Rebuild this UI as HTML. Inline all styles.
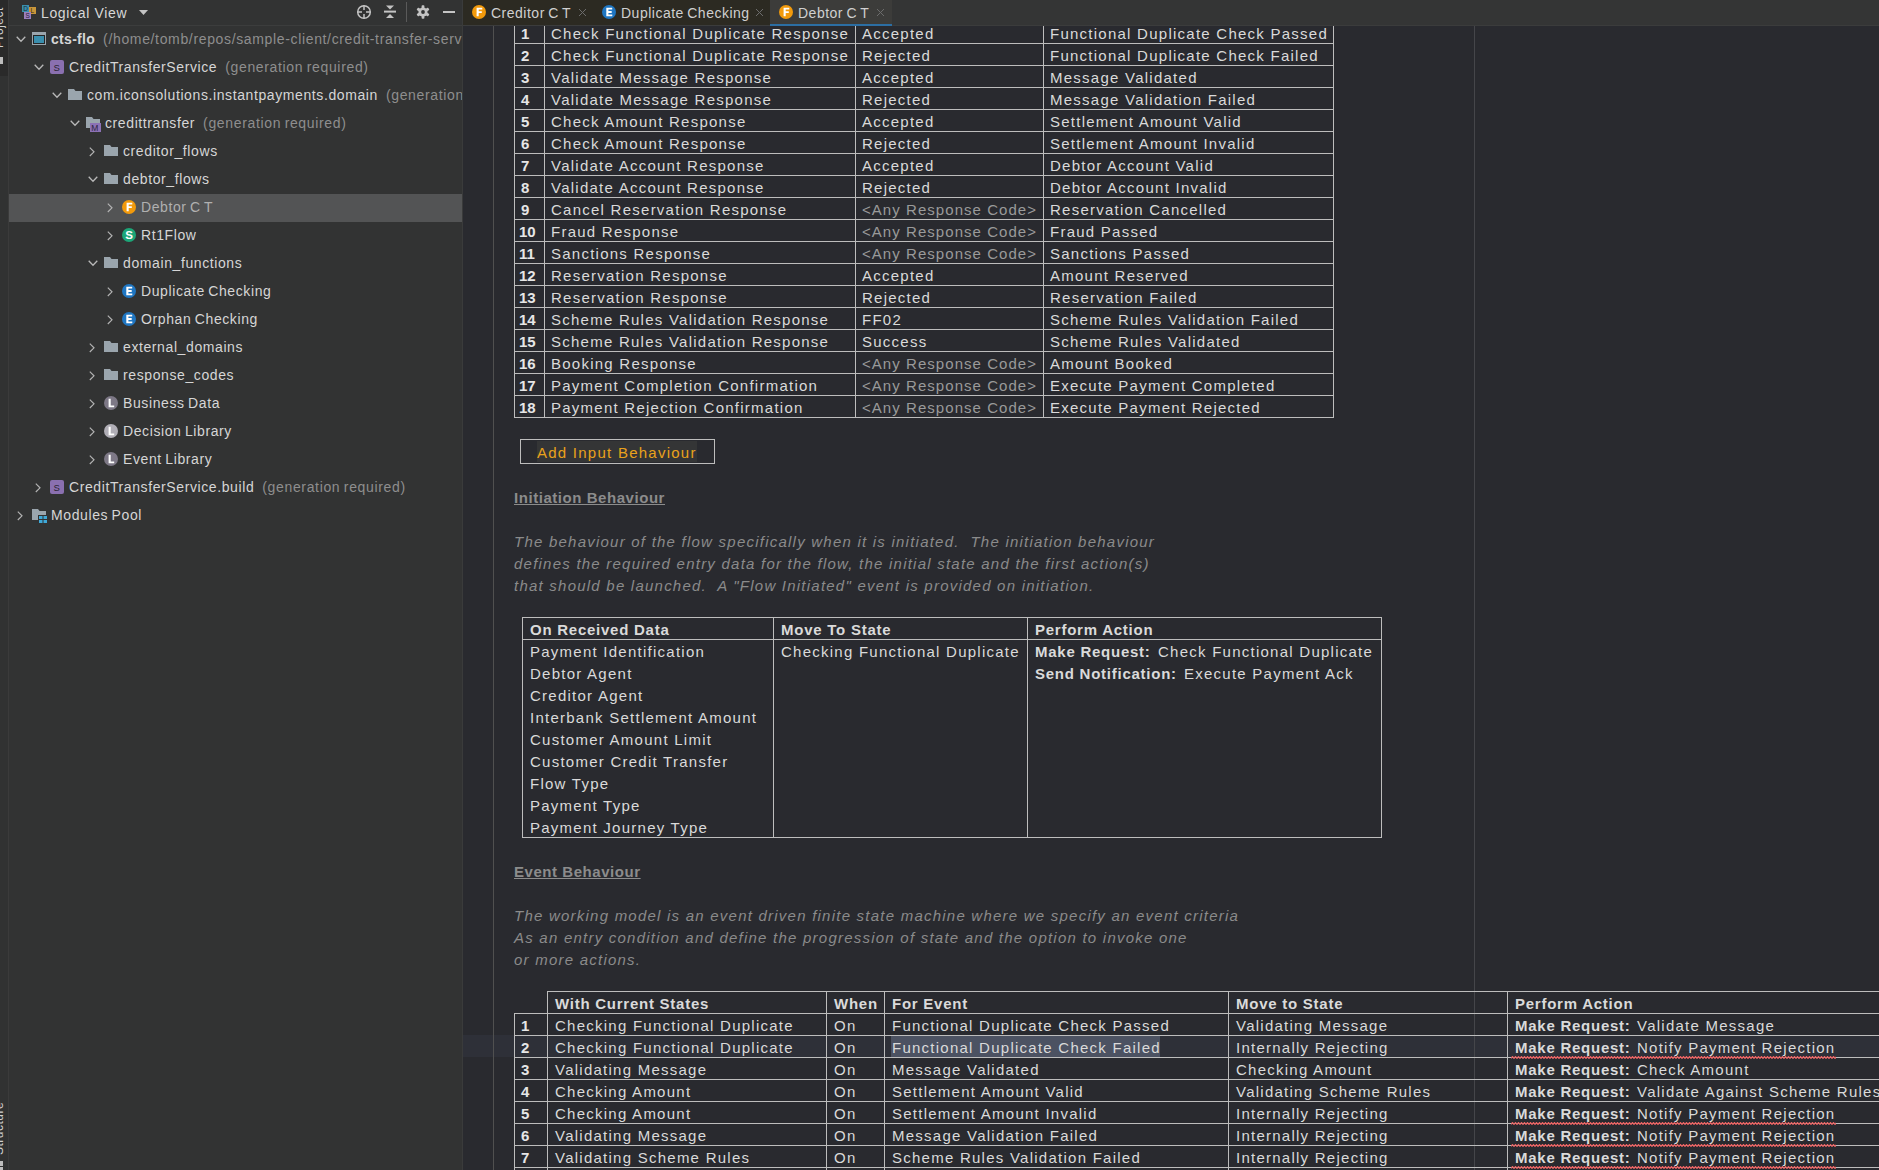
<!DOCTYPE html>
<html><head><meta charset="utf-8"><style>
html,body{margin:0;padding:0}
body{width:1879px;height:1170px;overflow:hidden;position:relative;background:#292a2f;font-family:"Liberation Sans",sans-serif}
.st,.tt,.tab,.ed,.num,.bd,.it,.hd,.rot{position:absolute;white-space:pre;line-height:20px}
.st{font-size:14px;letter-spacing:0.65px;color:#d8d8d8}
.tt{font-size:14px;letter-spacing:0.6px;word-spacing:-1px;color:#d6d6d6}
.tt .dim{color:#8e8e8e;font-weight:normal;letter-spacing:0.65px;margin-left:8px}
.tab{font-size:14px;letter-spacing:0.5px;word-spacing:-1px;color:#d0d0d0}
.ed{font-size:15px;letter-spacing:1.25px;color:#dadada}
.num{font-size:15px;font-weight:bold;letter-spacing:0px;color:#e6e6e6}
.bd{font-size:15px;font-weight:bold;letter-spacing:0.75px;color:#dadada}
.it{font-size:15px;font-style:italic;letter-spacing:1.23px;color:#8b8b8b}
.hd{font-size:15px;font-weight:bold;letter-spacing:0.55px;color:#8c8c8c;text-decoration:underline;text-underline-offset:1px}
.rot{font-size:12px;letter-spacing:0.5px;color:#d0d0d0;transform:rotate(-90deg);transform-origin:0 0}
</style></head><body>
<div style="position:absolute;left:0px;top:0px;width:8px;height:1170px;background:#313232;"></div>
<div style="position:absolute;left:0px;top:0px;width:8px;height:76px;background:#2a2a2a;"></div>
<div style="position:absolute;left:8px;top:0px;width:1px;height:1170px;background:#3b3b3b;"></div>
<div style="position:absolute;left:0;top:0;width:8px;height:1170px;overflow:hidden">
<div class="rot" style="left:-11px;top:48px;">Project</div>
<div style="position:absolute;left:0px;top:57px;width:3px;height:7px;background:#bdbdbd;"></div>
<div class="rot" style="left:-11px;top:1155px;">Structure</div>
<div style="position:absolute;left:0px;top:1161px;width:3px;height:5px;background:#bdbdbd;"></div>
<div style="position:absolute;left:0px;top:1167px;width:3px;height:3px;background:#bdbdbd;"></div>
</div>
<div style="position:absolute;left:9px;top:0px;width:453px;height:1170px;background:#323333;"></div>
<div style="position:absolute;left:9px;top:25px;width:453px;height:1px;background:#3c3d3d;"></div>
<div style="position:absolute;left:462px;top:0px;width:1px;height:1170px;background:#3a3b3b;"></div>
<svg style="position:absolute;left:22px;top:5px" width="15" height="15" viewBox="0 0 15 15">
<rect x="0" y="0" width="7" height="7" fill="#3a8fae"/><text x="1.2" y="6" font-size="6.5" font-family="Liberation Sans" fill="#1a2a30">D</text>
<rect x="7" y="2" width="7" height="7" fill="#c9963a"/><text x="8.6" y="8" font-size="6.5" font-family="Liberation Sans" fill="#3a2a10">L</text>
<rect x="2" y="7" width="7" height="7" fill="#9a80bf"/><text x="3.4" y="13" font-size="6.5" font-family="Liberation Sans" fill="#2c2238">S</text>
</svg>
<div class="st" style="left:41px;top:3px;">Logical View</div>
<svg style="position:absolute;left:139px;top:10px" width="9" height="6"><path d="M0 0 L9 0 L4.5 5 Z" fill="#c4c4c4"/></svg>
<svg style="position:absolute;left:356px;top:4px" width="16" height="16" viewBox="0 0 16 16">
<circle cx="8" cy="8" r="6.3" fill="none" stroke="#c4c4c4" stroke-width="1.5"/>
<path d="M8 1.5V6 M8 10V14.5 M1.5 8H6 M10 8H14.5" stroke="#c4c4c4" stroke-width="1.5"/></svg>
<svg style="position:absolute;left:383px;top:5px" width="14" height="14" viewBox="0 0 14 14">
<path d="M3 0.5 H11 L7 4.5 Z" fill="#c4c4c4"/><rect x="1" y="5.6" width="12" height="2" fill="#c4c4c4"/>
<path d="M3 13 H11 L7 9 Z" fill="#c4c4c4"/></svg>
<div style="position:absolute;left:406px;top:2px;width:1px;height:20px;background:#5a5a5a;"></div>
<svg style="position:absolute;left:416px;top:5px" width="14" height="14" viewBox="0 0 14 14">
<g fill="#c4c4c4"><circle cx="7" cy="7" r="4.6"/>
<rect x="5.6" y="0.3" width="2.8" height="3" rx="0.8"/><rect x="5.6" y="10.7" width="2.8" height="3" rx="0.8"/>
<rect x="5.6" y="0.3" width="2.8" height="3" rx="0.8" transform="rotate(60 7 7)"/><rect x="5.6" y="10.7" width="2.8" height="3" rx="0.8" transform="rotate(60 7 7)"/>
<rect x="5.6" y="0.3" width="2.8" height="3" rx="0.8" transform="rotate(120 7 7)"/><rect x="5.6" y="10.7" width="2.8" height="3" rx="0.8" transform="rotate(120 7 7)"/>
</g><circle cx="7" cy="7" r="1.9" fill="#323333"/></svg>
<div style="position:absolute;left:443px;top:11px;width:12px;height:2px;background:#c4c4c4;"></div>
<div style="position:absolute;left:9px;top:26px;width:453px;height:1144px;overflow:hidden">
<svg style="position:absolute;left:7px;top:10px" width="10" height="7" viewBox="0 0 10 7"><path d="M0.7 0.8 L5 5.2 L9.3 0.8" fill="none" stroke="#b8b8b8" stroke-width="1.3"/></svg>
<svg style="position:absolute;left:23px;top:6px" width="14" height="13" viewBox="0 0 14 13">
<rect x="0" y="0" width="14" height="13" fill="#9aa5ad"/><rect x="1" y="3" width="12" height="9" fill="#252525"/>
<rect x="2" y="4" width="10" height="7" fill="#3a8fae"/></svg>
<div class="tt" style="left:42px;top:3px;font-weight:bold;letter-spacing:0.3px">cts-flo<span class="dim">(/home/tomb/repos/sample-client/credit-transfer-service)</span></div>
<svg style="position:absolute;left:25px;top:38px" width="10" height="7" viewBox="0 0 10 7"><path d="M0.7 0.8 L5 5.2 L9.3 0.8" fill="none" stroke="#b8b8b8" stroke-width="1.3"/></svg>
<svg style="position:absolute;left:41px;top:34px" width="14" height="14" viewBox="0 0 14 14">
<rect x="0" y="0" width="14" height="14" rx="2" fill="#8a70b0"/><text x="3.6" y="10.6" font-size="9.5" font-family="Liberation Sans" fill="#2a2430">S</text></svg>
<div class="tt" style="left:60px;top:31px;">CreditTransferService<span class="dim">(generation required)</span></div>
<svg style="position:absolute;left:43px;top:66px" width="10" height="7" viewBox="0 0 10 7"><path d="M0.7 0.8 L5 5.2 L9.3 0.8" fill="none" stroke="#b8b8b8" stroke-width="1.3"/></svg>
<svg style="position:absolute;left:59px;top:63px" width="14" height="12" viewBox="0 0 14 12">
<path d="M0 0 H6 L7.5 2 H14 V11 H0 Z" fill="#9aa5ad"/></svg>
<div class="tt" style="left:78px;top:59px;">com.iconsolutions.instantpayments.domain<span class="dim">(generation required)</span></div>
<svg style="position:absolute;left:61px;top:94px" width="10" height="7" viewBox="0 0 10 7"><path d="M0.7 0.8 L5 5.2 L9.3 0.8" fill="none" stroke="#b8b8b8" stroke-width="1.3"/></svg>
<svg style="position:absolute;left:77px;top:91px" width="16" height="15" viewBox="0 0 16 15">
<path d="M0 0 H6 L7.5 2 H14 V11 H0 Z" fill="#9aa5ad"/><rect x="4" y="6" width="11" height="9" fill="#8c72b5"/>
<text x="5.3" y="14" font-size="8.5" font-family="Liberation Sans" fill="#2e2540">M</text></svg>
<div class="tt" style="left:96px;top:87px;">credittransfer<span class="dim">(generation required)</span></div>
<svg style="position:absolute;left:80px;top:121px" width="7" height="10" viewBox="0 0 7 10"><path d="M0.8 0.6 L5 4.8 L0.8 9" fill="none" stroke="#b4b4b4" stroke-width="1.15"/></svg>
<svg style="position:absolute;left:95px;top:119px" width="14" height="12" viewBox="0 0 14 12">
<path d="M0 0 H6 L7.5 2 H14 V11 H0 Z" fill="#9aa5ad"/></svg>
<div class="tt" style="left:114px;top:115px;">creditor_flows</div>
<svg style="position:absolute;left:79px;top:150px" width="10" height="7" viewBox="0 0 10 7"><path d="M0.7 0.8 L5 5.2 L9.3 0.8" fill="none" stroke="#b8b8b8" stroke-width="1.3"/></svg>
<svg style="position:absolute;left:95px;top:147px" width="14" height="12" viewBox="0 0 14 12">
<path d="M0 0 H6 L7.5 2 H14 V11 H0 Z" fill="#9aa5ad"/></svg>
<div class="tt" style="left:114px;top:143px;">debtor_flows</div>
<div style="position:absolute;left:0px;top:168px;width:453px;height:28px;background:#535455;"></div>
<svg style="position:absolute;left:98px;top:177px" width="7" height="10" viewBox="0 0 7 10"><path d="M0.8 0.6 L5 4.8 L0.8 9" fill="none" stroke="#b4b4b4" stroke-width="1.15"/></svg>
<svg style="position:absolute;left:113px;top:174px" width="14" height="14" viewBox="0 0 14 14">
<circle cx="7" cy="7" r="7" fill="#f29a0c"/><path d="M4.6 2.7H10.3V4.6H6.7V6.3H9.8V8.1H6.7V11.3H4.6Z" fill="#fff"/></svg>
<div class="tt" style="left:132px;top:171px;color:#b0b0b0">Debtor C T</div>
<svg style="position:absolute;left:98px;top:205px" width="7" height="10" viewBox="0 0 7 10"><path d="M0.8 0.6 L5 4.8 L0.8 9" fill="none" stroke="#b4b4b4" stroke-width="1.15"/></svg>
<svg style="position:absolute;left:113px;top:202px" width="14" height="14" viewBox="0 0 14 14">
<circle cx="7" cy="7" r="7" fill="#1ca678"/><text x="7" y="11.2" text-anchor="middle" font-size="11.5" font-weight="bold" font-family="Liberation Sans" fill="#fff">S</text></svg>
<div class="tt" style="left:132px;top:199px;">Rt1Flow</div>
<svg style="position:absolute;left:79px;top:234px" width="10" height="7" viewBox="0 0 10 7"><path d="M0.7 0.8 L5 5.2 L9.3 0.8" fill="none" stroke="#b8b8b8" stroke-width="1.3"/></svg>
<svg style="position:absolute;left:95px;top:231px" width="14" height="12" viewBox="0 0 14 12">
<path d="M0 0 H6 L7.5 2 H14 V11 H0 Z" fill="#9aa5ad"/></svg>
<div class="tt" style="left:114px;top:227px;">domain_functions</div>
<svg style="position:absolute;left:98px;top:261px" width="7" height="10" viewBox="0 0 7 10"><path d="M0.8 0.6 L5 4.8 L0.8 9" fill="none" stroke="#b4b4b4" stroke-width="1.15"/></svg>
<svg style="position:absolute;left:113px;top:258px" width="14" height="14" viewBox="0 0 14 14">
<circle cx="7" cy="7" r="7" fill="#1f76c2"/><path d="M4.3 2.7H10.2V4.6H6.4V6.1H9.7V7.9H6.4V9.4H10.3V11.3H4.3Z" fill="#fff"/></svg>
<div class="tt" style="left:132px;top:255px;">Duplicate Checking</div>
<svg style="position:absolute;left:98px;top:289px" width="7" height="10" viewBox="0 0 7 10"><path d="M0.8 0.6 L5 4.8 L0.8 9" fill="none" stroke="#b4b4b4" stroke-width="1.15"/></svg>
<svg style="position:absolute;left:113px;top:286px" width="14" height="14" viewBox="0 0 14 14">
<circle cx="7" cy="7" r="7" fill="#1f76c2"/><path d="M4.3 2.7H10.2V4.6H6.4V6.1H9.7V7.9H6.4V9.4H10.3V11.3H4.3Z" fill="#fff"/></svg>
<div class="tt" style="left:132px;top:283px;">Orphan Checking</div>
<svg style="position:absolute;left:80px;top:317px" width="7" height="10" viewBox="0 0 7 10"><path d="M0.8 0.6 L5 4.8 L0.8 9" fill="none" stroke="#b4b4b4" stroke-width="1.15"/></svg>
<svg style="position:absolute;left:95px;top:315px" width="14" height="12" viewBox="0 0 14 12">
<path d="M0 0 H6 L7.5 2 H14 V11 H0 Z" fill="#9aa5ad"/></svg>
<div class="tt" style="left:114px;top:311px;">external_domains</div>
<svg style="position:absolute;left:80px;top:345px" width="7" height="10" viewBox="0 0 7 10"><path d="M0.8 0.6 L5 4.8 L0.8 9" fill="none" stroke="#b4b4b4" stroke-width="1.15"/></svg>
<svg style="position:absolute;left:95px;top:343px" width="14" height="12" viewBox="0 0 14 12">
<path d="M0 0 H6 L7.5 2 H14 V11 H0 Z" fill="#9aa5ad"/></svg>
<div class="tt" style="left:114px;top:339px;">response_codes</div>
<svg style="position:absolute;left:80px;top:373px" width="7" height="10" viewBox="0 0 7 10"><path d="M0.8 0.6 L5 4.8 L0.8 9" fill="none" stroke="#b4b4b4" stroke-width="1.15"/></svg>
<svg style="position:absolute;left:95px;top:370px" width="14" height="14" viewBox="0 0 14 14">
<circle cx="7" cy="7" r="7" fill="#7d7886"/><path d="M4.6 2.7H6.7V9.4H10.2V11.3H4.6Z" fill="#fff"/></svg>
<div class="tt" style="left:114px;top:367px;">Business Data</div>
<svg style="position:absolute;left:80px;top:401px" width="7" height="10" viewBox="0 0 7 10"><path d="M0.8 0.6 L5 4.8 L0.8 9" fill="none" stroke="#b4b4b4" stroke-width="1.15"/></svg>
<svg style="position:absolute;left:95px;top:398px" width="14" height="14" viewBox="0 0 14 14">
<circle cx="7" cy="7" r="7" fill="#b0aeb6"/><path d="M4.6 2.7H6.7V9.4H10.2V11.3H4.6Z" fill="#fff"/></svg>
<div class="tt" style="left:114px;top:395px;">Decision Library</div>
<svg style="position:absolute;left:80px;top:429px" width="7" height="10" viewBox="0 0 7 10"><path d="M0.8 0.6 L5 4.8 L0.8 9" fill="none" stroke="#b4b4b4" stroke-width="1.15"/></svg>
<svg style="position:absolute;left:95px;top:426px" width="14" height="14" viewBox="0 0 14 14">
<circle cx="7" cy="7" r="7" fill="#7d7886"/><path d="M4.6 2.7H6.7V9.4H10.2V11.3H4.6Z" fill="#fff"/></svg>
<div class="tt" style="left:114px;top:423px;">Event Library</div>
<svg style="position:absolute;left:26px;top:457px" width="7" height="10" viewBox="0 0 7 10"><path d="M0.8 0.6 L5 4.8 L0.8 9" fill="none" stroke="#b4b4b4" stroke-width="1.15"/></svg>
<svg style="position:absolute;left:41px;top:454px" width="14" height="14" viewBox="0 0 14 14">
<rect x="0" y="0" width="14" height="14" rx="2" fill="#8a70b0"/><text x="3.6" y="10.6" font-size="9.5" font-family="Liberation Sans" fill="#2a2430">S</text></svg>
<div class="tt" style="left:60px;top:451px;">CreditTransferService.build<span class="dim">(generation required)</span></div>
<svg style="position:absolute;left:8px;top:485px" width="7" height="10" viewBox="0 0 7 10"><path d="M0.8 0.6 L5 4.8 L0.8 9" fill="none" stroke="#b4b4b4" stroke-width="1.15"/></svg>
<svg style="position:absolute;left:23px;top:483px" width="16" height="15" viewBox="0 0 16 15">
<path d="M0 0 H6 L7.5 2 H14 V11 H0 Z" fill="#9aa5ad"/><rect x="6" y="6" width="10" height="9" fill="#323333"/>
<g fill="#3fa9d8"><rect x="7" y="7" width="3.5" height="3"/><rect x="11.5" y="7" width="3.5" height="3"/><rect x="7" y="11" width="3.5" height="3"/><rect x="11.5" y="11" width="3.5" height="3"/></g></svg>
<div class="tt" style="left:42px;top:479px;">Modules Pool</div>
</div>
<div style="position:absolute;left:463px;top:0px;width:1416px;height:25px;background:#343535;"></div>
<div style="position:absolute;left:463px;top:0px;width:307px;height:25px;background:#2c2a22;"></div>
<div style="position:absolute;left:770px;top:0px;width:122px;height:25px;background:#3c3c3a;"></div>
<div style="position:absolute;left:463px;top:25px;width:1416px;height:1px;background:#3b3c3c;"></div>
<div style="position:absolute;left:770px;top:24px;width:122px;height:2px;background:#2c6ea3;"></div>
<svg style="position:absolute;left:472px;top:5px" width="14" height="14" viewBox="0 0 14 14">
<circle cx="7" cy="7" r="7" fill="#f29a0c"/><path d="M4.6 2.7H10.3V4.6H6.7V6.3H9.8V8.1H6.7V11.3H4.6Z" fill="#fff"/></svg>
<div class="tab" style="left:491px;top:3px;">Creditor C T</div>
<svg style="position:absolute;left:578px;top:8px" width="9" height="9" viewBox="0 0 9 9"><path d="M1 1 L8 8 M8 1 L1 8" stroke="#6c6c6c" stroke-width="1"/></svg>
<svg style="position:absolute;left:602px;top:5px" width="14" height="14" viewBox="0 0 14 14">
<circle cx="7" cy="7" r="7" fill="#1f76c2"/><path d="M4.3 2.7H10.2V4.6H6.4V6.1H9.7V7.9H6.4V9.4H10.3V11.3H4.3Z" fill="#fff"/></svg>
<div class="tab" style="left:621px;top:3px;">Duplicate Checking</div>
<svg style="position:absolute;left:755px;top:8px" width="9" height="9" viewBox="0 0 9 9"><path d="M1 1 L8 8 M8 1 L1 8" stroke="#6c6c6c" stroke-width="1"/></svg>
<svg style="position:absolute;left:779px;top:5px" width="14" height="14" viewBox="0 0 14 14">
<circle cx="7" cy="7" r="7" fill="#f29a0c"/><path d="M4.6 2.7H10.3V4.6H6.7V6.3H9.8V8.1H6.7V11.3H4.6Z" fill="#fff"/></svg>
<div class="tab" style="left:798px;top:3px;">Debtor C T</div>
<svg style="position:absolute;left:876px;top:8px" width="9" height="9" viewBox="0 0 9 9"><path d="M1 1 L8 8 M8 1 L1 8" stroke="#6c6c6c" stroke-width="1"/></svg>
<div style="position:absolute;left:463px;top:26px;width:1416px;height:1144px;overflow:hidden;background:#292a2f">
<div style="position:absolute;left:0px;top:1009px;width:1416px;height:22px;background:#2e3038;"></div>
<div style="position:absolute;left:30px;top:0px;width:1px;height:1144px;background:#505050;"></div>
<div style="position:absolute;left:1011px;top:0px;width:1px;height:1144px;background:#45464a;"></div>
<div style="position:absolute;left:51px;top:0px;width:1px;height:392px;background:#bdbdbd;"></div>
<div style="position:absolute;left:81px;top:0px;width:1px;height:392px;background:#bdbdbd;"></div>
<div style="position:absolute;left:392px;top:0px;width:1px;height:392px;background:#bdbdbd;"></div>
<div style="position:absolute;left:580px;top:0px;width:1px;height:392px;background:#bdbdbd;"></div>
<div style="position:absolute;left:870px;top:0px;width:1px;height:392px;background:#bdbdbd;"></div>
<div style="position:absolute;left:51px;top:17px;width:820px;height:1px;background:#bdbdbd;"></div>
<div style="position:absolute;left:51px;top:39px;width:820px;height:1px;background:#bdbdbd;"></div>
<div style="position:absolute;left:51px;top:61px;width:820px;height:1px;background:#bdbdbd;"></div>
<div style="position:absolute;left:51px;top:83px;width:820px;height:1px;background:#bdbdbd;"></div>
<div style="position:absolute;left:51px;top:105px;width:820px;height:1px;background:#bdbdbd;"></div>
<div style="position:absolute;left:51px;top:127px;width:820px;height:1px;background:#bdbdbd;"></div>
<div style="position:absolute;left:51px;top:149px;width:820px;height:1px;background:#bdbdbd;"></div>
<div style="position:absolute;left:51px;top:171px;width:820px;height:1px;background:#bdbdbd;"></div>
<div style="position:absolute;left:51px;top:193px;width:820px;height:1px;background:#bdbdbd;"></div>
<div style="position:absolute;left:51px;top:215px;width:820px;height:1px;background:#bdbdbd;"></div>
<div style="position:absolute;left:51px;top:237px;width:820px;height:1px;background:#bdbdbd;"></div>
<div style="position:absolute;left:51px;top:259px;width:820px;height:1px;background:#bdbdbd;"></div>
<div style="position:absolute;left:51px;top:281px;width:820px;height:1px;background:#bdbdbd;"></div>
<div style="position:absolute;left:51px;top:303px;width:820px;height:1px;background:#bdbdbd;"></div>
<div style="position:absolute;left:51px;top:325px;width:820px;height:1px;background:#bdbdbd;"></div>
<div style="position:absolute;left:51px;top:347px;width:820px;height:1px;background:#bdbdbd;"></div>
<div style="position:absolute;left:51px;top:369px;width:820px;height:1px;background:#bdbdbd;"></div>
<div style="position:absolute;left:51px;top:391px;width:820px;height:1px;background:#bdbdbd;"></div>
<div class="num" style="left:58px;top:-2px;">1</div>
<div class="ed" style="left:88px;top:-2px;">Check Functional Duplicate Response</div>
<div class="ed" style="left:399px;top:-2px;">Accepted</div>
<div class="ed" style="left:587px;top:-2px;">Functional Duplicate Check Passed</div>
<div class="num" style="left:58px;top:20px;">2</div>
<div class="ed" style="left:88px;top:20px;">Check Functional Duplicate Response</div>
<div class="ed" style="left:399px;top:20px;">Rejected</div>
<div class="ed" style="left:587px;top:20px;">Functional Duplicate Check Failed</div>
<div class="num" style="left:58px;top:42px;">3</div>
<div class="ed" style="left:88px;top:42px;">Validate Message Response</div>
<div class="ed" style="left:399px;top:42px;">Accepted</div>
<div class="ed" style="left:587px;top:42px;">Message Validated</div>
<div class="num" style="left:58px;top:64px;">4</div>
<div class="ed" style="left:88px;top:64px;">Validate Message Response</div>
<div class="ed" style="left:399px;top:64px;">Rejected</div>
<div class="ed" style="left:587px;top:64px;">Message Validation Failed</div>
<div class="num" style="left:58px;top:86px;">5</div>
<div class="ed" style="left:88px;top:86px;">Check Amount Response</div>
<div class="ed" style="left:399px;top:86px;">Accepted</div>
<div class="ed" style="left:587px;top:86px;">Settlement Amount Valid</div>
<div class="num" style="left:58px;top:108px;">6</div>
<div class="ed" style="left:88px;top:108px;">Check Amount Response</div>
<div class="ed" style="left:399px;top:108px;">Rejected</div>
<div class="ed" style="left:587px;top:108px;">Settlement Amount Invalid</div>
<div class="num" style="left:58px;top:130px;">7</div>
<div class="ed" style="left:88px;top:130px;">Validate Account Response</div>
<div class="ed" style="left:399px;top:130px;">Accepted</div>
<div class="ed" style="left:587px;top:130px;">Debtor Account Valid</div>
<div class="num" style="left:58px;top:152px;">8</div>
<div class="ed" style="left:88px;top:152px;">Validate Account Response</div>
<div class="ed" style="left:399px;top:152px;">Rejected</div>
<div class="ed" style="left:587px;top:152px;">Debtor Account Invalid</div>
<div class="num" style="left:58px;top:174px;">9</div>
<div class="ed" style="left:88px;top:174px;">Cancel Reservation Response</div>
<div class="ed" style="left:399px;top:174px;color:#9a9a9a;letter-spacing:1.05px">&lt;Any Response Code&gt;</div>
<div class="ed" style="left:587px;top:174px;">Reservation Cancelled</div>
<div class="num" style="left:56px;top:196px;">10</div>
<div class="ed" style="left:88px;top:196px;">Fraud Response</div>
<div class="ed" style="left:399px;top:196px;color:#9a9a9a;letter-spacing:1.05px">&lt;Any Response Code&gt;</div>
<div class="ed" style="left:587px;top:196px;">Fraud Passed</div>
<div class="num" style="left:56px;top:218px;">11</div>
<div class="ed" style="left:88px;top:218px;">Sanctions Response</div>
<div class="ed" style="left:399px;top:218px;color:#9a9a9a;letter-spacing:1.05px">&lt;Any Response Code&gt;</div>
<div class="ed" style="left:587px;top:218px;">Sanctions Passed</div>
<div class="num" style="left:56px;top:240px;">12</div>
<div class="ed" style="left:88px;top:240px;">Reservation Response</div>
<div class="ed" style="left:399px;top:240px;">Accepted</div>
<div class="ed" style="left:587px;top:240px;">Amount Reserved</div>
<div class="num" style="left:56px;top:262px;">13</div>
<div class="ed" style="left:88px;top:262px;">Reservation Response</div>
<div class="ed" style="left:399px;top:262px;">Rejected</div>
<div class="ed" style="left:587px;top:262px;">Reservation Failed</div>
<div class="num" style="left:56px;top:284px;">14</div>
<div class="ed" style="left:88px;top:284px;">Scheme Rules Validation Response</div>
<div class="ed" style="left:399px;top:284px;">FF02</div>
<div class="ed" style="left:587px;top:284px;">Scheme Rules Validation Failed</div>
<div class="num" style="left:56px;top:306px;">15</div>
<div class="ed" style="left:88px;top:306px;">Scheme Rules Validation Response</div>
<div class="ed" style="left:399px;top:306px;">Success</div>
<div class="ed" style="left:587px;top:306px;">Scheme Rules Validated</div>
<div class="num" style="left:56px;top:328px;">16</div>
<div class="ed" style="left:88px;top:328px;">Booking Response</div>
<div class="ed" style="left:399px;top:328px;color:#9a9a9a;letter-spacing:1.05px">&lt;Any Response Code&gt;</div>
<div class="ed" style="left:587px;top:328px;">Amount Booked</div>
<div class="num" style="left:56px;top:350px;">17</div>
<div class="ed" style="left:88px;top:350px;">Payment Completion Confirmation</div>
<div class="ed" style="left:399px;top:350px;color:#9a9a9a;letter-spacing:1.05px">&lt;Any Response Code&gt;</div>
<div class="ed" style="left:587px;top:350px;">Execute Payment Completed</div>
<div class="num" style="left:56px;top:372px;">18</div>
<div class="ed" style="left:88px;top:372px;">Payment Rejection Confirmation</div>
<div class="ed" style="left:399px;top:372px;color:#9a9a9a;letter-spacing:1.05px">&lt;Any Response Code&gt;</div>
<div class="ed" style="left:587px;top:372px;">Execute Payment Rejected</div>
<div style="position:absolute;left:57px;top:413px;width:195px;height:25px;background:transparent;box-sizing:border-box;border:1px solid #bdbdbd"></div>
<div style="position:absolute;left:74px;top:415px;width:160px;height:21px;background:#343536;"></div>
<div class="ed" style="left:74px;top:417px;color:#e9a21c">Add Input Behaviour</div>
<div class="hd" style="left:51px;top:462px;">Initiation Behaviour</div>
<div class="it" style="left:51px;top:506px;">The behaviour of the flow specifically when it is initiated.  The initiation behaviour</div>
<div class="it" style="left:51px;top:528px;">defines the required entry data for the flow, the initial state and the first action(s)</div>
<div class="it" style="left:51px;top:550px;">that should be launched.  A &quot;Flow Initiated&quot; event is provided on initiation.</div>
<div style="position:absolute;left:59px;top:591px;width:860px;height:221px;background:transparent;box-sizing:border-box;border:1px solid #bdbdbd"></div>
<div style="position:absolute;left:59px;top:613px;width:859px;height:1px;background:#bdbdbd;"></div>
<div style="position:absolute;left:310px;top:591px;width:1px;height:220px;background:#bdbdbd;"></div>
<div style="position:absolute;left:564px;top:591px;width:1px;height:220px;background:#bdbdbd;"></div>
<div class="bd" style="left:67px;top:594px;">On Received Data</div>
<div class="bd" style="left:318px;top:594px;">Move To State</div>
<div class="bd" style="left:572px;top:594px;">Perform Action</div>
<div class="ed" style="left:67px;top:616px;">Payment Identification</div>
<div class="ed" style="left:67px;top:638px;">Debtor Agent</div>
<div class="ed" style="left:67px;top:660px;">Creditor Agent</div>
<div class="ed" style="left:67px;top:682px;">Interbank Settlement Amount</div>
<div class="ed" style="left:67px;top:704px;">Customer Amount Limit</div>
<div class="ed" style="left:67px;top:726px;">Customer Credit Transfer</div>
<div class="ed" style="left:67px;top:748px;">Flow Type</div>
<div class="ed" style="left:67px;top:770px;">Payment Type</div>
<div class="ed" style="left:67px;top:792px;">Payment Journey Type</div>
<div class="ed" style="left:318px;top:616px;">Checking Functional Duplicate</div>
<div class="bd" style="left:572px;top:616px;">Make Request:</div>
<div class="ed" style="left:695px;top:616px;">Check Functional Duplicate</div>
<div class="bd" style="left:572px;top:638px;">Send Notification:</div>
<div class="ed" style="left:721px;top:638px;">Execute Payment Ack</div>
<div class="hd" style="left:51px;top:836px;">Event Behaviour</div>
<div class="it" style="left:51px;top:880px;">The working model is an event driven finite state machine where we specify an event criteria</div>
<div class="it" style="left:51px;top:902px;">As an entry condition and define the progression of state and the option to invoke one</div>
<div class="it" style="left:51px;top:924px;">or more actions.</div>
<div style="position:absolute;left:84px;top:965px;width:1332px;height:1px;background:#bdbdbd;"></div>
<div style="position:absolute;left:84px;top:965px;width:1px;height:179px;background:#bdbdbd;"></div>
<div style="position:absolute;left:363px;top:965px;width:1px;height:179px;background:#bdbdbd;"></div>
<div style="position:absolute;left:421px;top:965px;width:1px;height:179px;background:#bdbdbd;"></div>
<div style="position:absolute;left:765px;top:965px;width:1px;height:179px;background:#bdbdbd;"></div>
<div style="position:absolute;left:1044px;top:965px;width:1px;height:179px;background:#bdbdbd;"></div>
<div style="position:absolute;left:51px;top:987px;width:1px;height:157px;background:#bdbdbd;"></div>
<div style="position:absolute;left:51px;top:987px;width:1365px;height:1px;background:#bdbdbd;"></div>
<div style="position:absolute;left:51px;top:1009px;width:1365px;height:1px;background:#bdbdbd;"></div>
<div style="position:absolute;left:51px;top:1031px;width:1365px;height:1px;background:#bdbdbd;"></div>
<div style="position:absolute;left:51px;top:1053px;width:1365px;height:1px;background:#bdbdbd;"></div>
<div style="position:absolute;left:51px;top:1075px;width:1365px;height:1px;background:#bdbdbd;"></div>
<div style="position:absolute;left:51px;top:1097px;width:1365px;height:1px;background:#bdbdbd;"></div>
<div style="position:absolute;left:51px;top:1119px;width:1365px;height:1px;background:#bdbdbd;"></div>
<div style="position:absolute;left:51px;top:1141px;width:1365px;height:1px;background:#bdbdbd;"></div>
<div style="position:absolute;left:428px;top:1010px;width:269px;height:21px;background:#4c5262;"></div>
<div class="bd" style="left:92px;top:968px;">With Current States</div>
<div class="bd" style="left:371px;top:968px;">When</div>
<div class="bd" style="left:429px;top:968px;">For Event</div>
<div class="bd" style="left:773px;top:968px;">Move to State</div>
<div class="bd" style="left:1052px;top:968px;">Perform Action</div>
<div class="num" style="left:58px;top:990px;">1</div>
<div class="ed" style="left:92px;top:990px;">Checking Functional Duplicate</div>
<div class="ed" style="left:371px;top:990px;">On</div>
<div class="ed" style="left:429px;top:990px;">Functional Duplicate Check Passed</div>
<div class="ed" style="left:773px;top:990px;">Validating Message</div>
<div class="bd" style="left:1052px;top:990px;">Make Request:</div>
<div class="ed" style="left:1174px;top:990px;">Validate Message</div>
<div class="num" style="left:58px;top:1012px;">2</div>
<div class="ed" style="left:92px;top:1012px;">Checking Functional Duplicate</div>
<div class="ed" style="left:371px;top:1012px;">On</div>
<div class="ed" style="left:429px;top:1012px;">Functional Duplicate Check Failed</div>
<div class="ed" style="left:773px;top:1012px;">Internally Rejecting</div>
<div class="bd" style="left:1052px;top:1012px;">Make Request:</div>
<div class="ed" style="left:1174px;top:1012px;">Notify Payment Rejection</div>
<svg style="position:absolute;left:1048px;top:1030px" width="325" height="3" viewBox="0 0 325 3"><polyline points="0.0,2.5 1.5,0.5 3.0,2.5 4.5,0.5 6.0,2.5 7.5,0.5 9.0,2.5 10.5,0.5 12.0,2.5 13.5,0.5 15.0,2.5 16.5,0.5 18.0,2.5 19.5,0.5 21.0,2.5 22.5,0.5 24.0,2.5 25.5,0.5 27.0,2.5 28.5,0.5 30.0,2.5 31.5,0.5 33.0,2.5 34.5,0.5 36.0,2.5 37.5,0.5 39.0,2.5 40.5,0.5 42.0,2.5 43.5,0.5 45.0,2.5 46.5,0.5 48.0,2.5 49.5,0.5 51.0,2.5 52.5,0.5 54.0,2.5 55.5,0.5 57.0,2.5 58.5,0.5 60.0,2.5 61.5,0.5 63.0,2.5 64.5,0.5 66.0,2.5 67.5,0.5 69.0,2.5 70.5,0.5 72.0,2.5 73.5,0.5 75.0,2.5 76.5,0.5 78.0,2.5 79.5,0.5 81.0,2.5 82.5,0.5 84.0,2.5 85.5,0.5 87.0,2.5 88.5,0.5 90.0,2.5 91.5,0.5 93.0,2.5 94.5,0.5 96.0,2.5 97.5,0.5 99.0,2.5 100.5,0.5 102.0,2.5 103.5,0.5 105.0,2.5 106.5,0.5 108.0,2.5 109.5,0.5 111.0,2.5 112.5,0.5 114.0,2.5 115.5,0.5 117.0,2.5 118.5,0.5 120.0,2.5 121.5,0.5 123.0,2.5 124.5,0.5 126.0,2.5 127.5,0.5 129.0,2.5 130.5,0.5 132.0,2.5 133.5,0.5 135.0,2.5 136.5,0.5 138.0,2.5 139.5,0.5 141.0,2.5 142.5,0.5 144.0,2.5 145.5,0.5 147.0,2.5 148.5,0.5 150.0,2.5 151.5,0.5 153.0,2.5 154.5,0.5 156.0,2.5 157.5,0.5 159.0,2.5 160.5,0.5 162.0,2.5 163.5,0.5 165.0,2.5 166.5,0.5 168.0,2.5 169.5,0.5 171.0,2.5 172.5,0.5 174.0,2.5 175.5,0.5 177.0,2.5 178.5,0.5 180.0,2.5 181.5,0.5 183.0,2.5 184.5,0.5 186.0,2.5 187.5,0.5 189.0,2.5 190.5,0.5 192.0,2.5 193.5,0.5 195.0,2.5 196.5,0.5 198.0,2.5 199.5,0.5 201.0,2.5 202.5,0.5 204.0,2.5 205.5,0.5 207.0,2.5 208.5,0.5 210.0,2.5 211.5,0.5 213.0,2.5 214.5,0.5 216.0,2.5 217.5,0.5 219.0,2.5 220.5,0.5 222.0,2.5 223.5,0.5 225.0,2.5 226.5,0.5 228.0,2.5 229.5,0.5 231.0,2.5 232.5,0.5 234.0,2.5 235.5,0.5 237.0,2.5 238.5,0.5 240.0,2.5 241.5,0.5 243.0,2.5 244.5,0.5 246.0,2.5 247.5,0.5 249.0,2.5 250.5,0.5 252.0,2.5 253.5,0.5 255.0,2.5 256.5,0.5 258.0,2.5 259.5,0.5 261.0,2.5 262.5,0.5 264.0,2.5 265.5,0.5 267.0,2.5 268.5,0.5 270.0,2.5 271.5,0.5 273.0,2.5 274.5,0.5 276.0,2.5 277.5,0.5 279.0,2.5 280.5,0.5 282.0,2.5 283.5,0.5 285.0,2.5 286.5,0.5 288.0,2.5 289.5,0.5 291.0,2.5 292.5,0.5 294.0,2.5 295.5,0.5 297.0,2.5 298.5,0.5 300.0,2.5 301.5,0.5 303.0,2.5 304.5,0.5 306.0,2.5 307.5,0.5 309.0,2.5 310.5,0.5 312.0,2.5 313.5,0.5 315.0,2.5 316.5,0.5 318.0,2.5 319.5,0.5 321.0,2.5 322.5,0.5 324.0,2.5 325.5,0.5" fill="none" stroke="#e86262" stroke-width="1.2"/></svg>
<div class="num" style="left:58px;top:1034px;">3</div>
<div class="ed" style="left:92px;top:1034px;">Validating Message</div>
<div class="ed" style="left:371px;top:1034px;">On</div>
<div class="ed" style="left:429px;top:1034px;">Message Validated</div>
<div class="ed" style="left:773px;top:1034px;">Checking Amount</div>
<div class="bd" style="left:1052px;top:1034px;">Make Request:</div>
<div class="ed" style="left:1174px;top:1034px;">Check Amount</div>
<div class="num" style="left:58px;top:1056px;">4</div>
<div class="ed" style="left:92px;top:1056px;">Checking Amount</div>
<div class="ed" style="left:371px;top:1056px;">On</div>
<div class="ed" style="left:429px;top:1056px;">Settlement Amount Valid</div>
<div class="ed" style="left:773px;top:1056px;">Validating Scheme Rules</div>
<div class="bd" style="left:1052px;top:1056px;">Make Request:</div>
<div class="ed" style="left:1174px;top:1056px;">Validate Against Scheme Rules</div>
<div class="num" style="left:58px;top:1078px;">5</div>
<div class="ed" style="left:92px;top:1078px;">Checking Amount</div>
<div class="ed" style="left:371px;top:1078px;">On</div>
<div class="ed" style="left:429px;top:1078px;">Settlement Amount Invalid</div>
<div class="ed" style="left:773px;top:1078px;">Internally Rejecting</div>
<div class="bd" style="left:1052px;top:1078px;">Make Request:</div>
<div class="ed" style="left:1174px;top:1078px;">Notify Payment Rejection</div>
<svg style="position:absolute;left:1048px;top:1096px" width="325" height="3" viewBox="0 0 325 3"><polyline points="0.0,2.5 1.5,0.5 3.0,2.5 4.5,0.5 6.0,2.5 7.5,0.5 9.0,2.5 10.5,0.5 12.0,2.5 13.5,0.5 15.0,2.5 16.5,0.5 18.0,2.5 19.5,0.5 21.0,2.5 22.5,0.5 24.0,2.5 25.5,0.5 27.0,2.5 28.5,0.5 30.0,2.5 31.5,0.5 33.0,2.5 34.5,0.5 36.0,2.5 37.5,0.5 39.0,2.5 40.5,0.5 42.0,2.5 43.5,0.5 45.0,2.5 46.5,0.5 48.0,2.5 49.5,0.5 51.0,2.5 52.5,0.5 54.0,2.5 55.5,0.5 57.0,2.5 58.5,0.5 60.0,2.5 61.5,0.5 63.0,2.5 64.5,0.5 66.0,2.5 67.5,0.5 69.0,2.5 70.5,0.5 72.0,2.5 73.5,0.5 75.0,2.5 76.5,0.5 78.0,2.5 79.5,0.5 81.0,2.5 82.5,0.5 84.0,2.5 85.5,0.5 87.0,2.5 88.5,0.5 90.0,2.5 91.5,0.5 93.0,2.5 94.5,0.5 96.0,2.5 97.5,0.5 99.0,2.5 100.5,0.5 102.0,2.5 103.5,0.5 105.0,2.5 106.5,0.5 108.0,2.5 109.5,0.5 111.0,2.5 112.5,0.5 114.0,2.5 115.5,0.5 117.0,2.5 118.5,0.5 120.0,2.5 121.5,0.5 123.0,2.5 124.5,0.5 126.0,2.5 127.5,0.5 129.0,2.5 130.5,0.5 132.0,2.5 133.5,0.5 135.0,2.5 136.5,0.5 138.0,2.5 139.5,0.5 141.0,2.5 142.5,0.5 144.0,2.5 145.5,0.5 147.0,2.5 148.5,0.5 150.0,2.5 151.5,0.5 153.0,2.5 154.5,0.5 156.0,2.5 157.5,0.5 159.0,2.5 160.5,0.5 162.0,2.5 163.5,0.5 165.0,2.5 166.5,0.5 168.0,2.5 169.5,0.5 171.0,2.5 172.5,0.5 174.0,2.5 175.5,0.5 177.0,2.5 178.5,0.5 180.0,2.5 181.5,0.5 183.0,2.5 184.5,0.5 186.0,2.5 187.5,0.5 189.0,2.5 190.5,0.5 192.0,2.5 193.5,0.5 195.0,2.5 196.5,0.5 198.0,2.5 199.5,0.5 201.0,2.5 202.5,0.5 204.0,2.5 205.5,0.5 207.0,2.5 208.5,0.5 210.0,2.5 211.5,0.5 213.0,2.5 214.5,0.5 216.0,2.5 217.5,0.5 219.0,2.5 220.5,0.5 222.0,2.5 223.5,0.5 225.0,2.5 226.5,0.5 228.0,2.5 229.5,0.5 231.0,2.5 232.5,0.5 234.0,2.5 235.5,0.5 237.0,2.5 238.5,0.5 240.0,2.5 241.5,0.5 243.0,2.5 244.5,0.5 246.0,2.5 247.5,0.5 249.0,2.5 250.5,0.5 252.0,2.5 253.5,0.5 255.0,2.5 256.5,0.5 258.0,2.5 259.5,0.5 261.0,2.5 262.5,0.5 264.0,2.5 265.5,0.5 267.0,2.5 268.5,0.5 270.0,2.5 271.5,0.5 273.0,2.5 274.5,0.5 276.0,2.5 277.5,0.5 279.0,2.5 280.5,0.5 282.0,2.5 283.5,0.5 285.0,2.5 286.5,0.5 288.0,2.5 289.5,0.5 291.0,2.5 292.5,0.5 294.0,2.5 295.5,0.5 297.0,2.5 298.5,0.5 300.0,2.5 301.5,0.5 303.0,2.5 304.5,0.5 306.0,2.5 307.5,0.5 309.0,2.5 310.5,0.5 312.0,2.5 313.5,0.5 315.0,2.5 316.5,0.5 318.0,2.5 319.5,0.5 321.0,2.5 322.5,0.5 324.0,2.5 325.5,0.5" fill="none" stroke="#e86262" stroke-width="1.2"/></svg>
<div class="num" style="left:58px;top:1100px;">6</div>
<div class="ed" style="left:92px;top:1100px;">Validating Message</div>
<div class="ed" style="left:371px;top:1100px;">On</div>
<div class="ed" style="left:429px;top:1100px;">Message Validation Failed</div>
<div class="ed" style="left:773px;top:1100px;">Internally Rejecting</div>
<div class="bd" style="left:1052px;top:1100px;">Make Request:</div>
<div class="ed" style="left:1174px;top:1100px;">Notify Payment Rejection</div>
<svg style="position:absolute;left:1048px;top:1118px" width="325" height="3" viewBox="0 0 325 3"><polyline points="0.0,2.5 1.5,0.5 3.0,2.5 4.5,0.5 6.0,2.5 7.5,0.5 9.0,2.5 10.5,0.5 12.0,2.5 13.5,0.5 15.0,2.5 16.5,0.5 18.0,2.5 19.5,0.5 21.0,2.5 22.5,0.5 24.0,2.5 25.5,0.5 27.0,2.5 28.5,0.5 30.0,2.5 31.5,0.5 33.0,2.5 34.5,0.5 36.0,2.5 37.5,0.5 39.0,2.5 40.5,0.5 42.0,2.5 43.5,0.5 45.0,2.5 46.5,0.5 48.0,2.5 49.5,0.5 51.0,2.5 52.5,0.5 54.0,2.5 55.5,0.5 57.0,2.5 58.5,0.5 60.0,2.5 61.5,0.5 63.0,2.5 64.5,0.5 66.0,2.5 67.5,0.5 69.0,2.5 70.5,0.5 72.0,2.5 73.5,0.5 75.0,2.5 76.5,0.5 78.0,2.5 79.5,0.5 81.0,2.5 82.5,0.5 84.0,2.5 85.5,0.5 87.0,2.5 88.5,0.5 90.0,2.5 91.5,0.5 93.0,2.5 94.5,0.5 96.0,2.5 97.5,0.5 99.0,2.5 100.5,0.5 102.0,2.5 103.5,0.5 105.0,2.5 106.5,0.5 108.0,2.5 109.5,0.5 111.0,2.5 112.5,0.5 114.0,2.5 115.5,0.5 117.0,2.5 118.5,0.5 120.0,2.5 121.5,0.5 123.0,2.5 124.5,0.5 126.0,2.5 127.5,0.5 129.0,2.5 130.5,0.5 132.0,2.5 133.5,0.5 135.0,2.5 136.5,0.5 138.0,2.5 139.5,0.5 141.0,2.5 142.5,0.5 144.0,2.5 145.5,0.5 147.0,2.5 148.5,0.5 150.0,2.5 151.5,0.5 153.0,2.5 154.5,0.5 156.0,2.5 157.5,0.5 159.0,2.5 160.5,0.5 162.0,2.5 163.5,0.5 165.0,2.5 166.5,0.5 168.0,2.5 169.5,0.5 171.0,2.5 172.5,0.5 174.0,2.5 175.5,0.5 177.0,2.5 178.5,0.5 180.0,2.5 181.5,0.5 183.0,2.5 184.5,0.5 186.0,2.5 187.5,0.5 189.0,2.5 190.5,0.5 192.0,2.5 193.5,0.5 195.0,2.5 196.5,0.5 198.0,2.5 199.5,0.5 201.0,2.5 202.5,0.5 204.0,2.5 205.5,0.5 207.0,2.5 208.5,0.5 210.0,2.5 211.5,0.5 213.0,2.5 214.5,0.5 216.0,2.5 217.5,0.5 219.0,2.5 220.5,0.5 222.0,2.5 223.5,0.5 225.0,2.5 226.5,0.5 228.0,2.5 229.5,0.5 231.0,2.5 232.5,0.5 234.0,2.5 235.5,0.5 237.0,2.5 238.5,0.5 240.0,2.5 241.5,0.5 243.0,2.5 244.5,0.5 246.0,2.5 247.5,0.5 249.0,2.5 250.5,0.5 252.0,2.5 253.5,0.5 255.0,2.5 256.5,0.5 258.0,2.5 259.5,0.5 261.0,2.5 262.5,0.5 264.0,2.5 265.5,0.5 267.0,2.5 268.5,0.5 270.0,2.5 271.5,0.5 273.0,2.5 274.5,0.5 276.0,2.5 277.5,0.5 279.0,2.5 280.5,0.5 282.0,2.5 283.5,0.5 285.0,2.5 286.5,0.5 288.0,2.5 289.5,0.5 291.0,2.5 292.5,0.5 294.0,2.5 295.5,0.5 297.0,2.5 298.5,0.5 300.0,2.5 301.5,0.5 303.0,2.5 304.5,0.5 306.0,2.5 307.5,0.5 309.0,2.5 310.5,0.5 312.0,2.5 313.5,0.5 315.0,2.5 316.5,0.5 318.0,2.5 319.5,0.5 321.0,2.5 322.5,0.5 324.0,2.5 325.5,0.5" fill="none" stroke="#e86262" stroke-width="1.2"/></svg>
<div class="num" style="left:58px;top:1122px;">7</div>
<div class="ed" style="left:92px;top:1122px;">Validating Scheme Rules</div>
<div class="ed" style="left:371px;top:1122px;">On</div>
<div class="ed" style="left:429px;top:1122px;">Scheme Rules Validation Failed</div>
<div class="ed" style="left:773px;top:1122px;">Internally Rejecting</div>
<div class="bd" style="left:1052px;top:1122px;">Make Request:</div>
<div class="ed" style="left:1174px;top:1122px;">Notify Payment Rejection</div>
<svg style="position:absolute;left:1048px;top:1140px" width="325" height="3" viewBox="0 0 325 3"><polyline points="0.0,2.5 1.5,0.5 3.0,2.5 4.5,0.5 6.0,2.5 7.5,0.5 9.0,2.5 10.5,0.5 12.0,2.5 13.5,0.5 15.0,2.5 16.5,0.5 18.0,2.5 19.5,0.5 21.0,2.5 22.5,0.5 24.0,2.5 25.5,0.5 27.0,2.5 28.5,0.5 30.0,2.5 31.5,0.5 33.0,2.5 34.5,0.5 36.0,2.5 37.5,0.5 39.0,2.5 40.5,0.5 42.0,2.5 43.5,0.5 45.0,2.5 46.5,0.5 48.0,2.5 49.5,0.5 51.0,2.5 52.5,0.5 54.0,2.5 55.5,0.5 57.0,2.5 58.5,0.5 60.0,2.5 61.5,0.5 63.0,2.5 64.5,0.5 66.0,2.5 67.5,0.5 69.0,2.5 70.5,0.5 72.0,2.5 73.5,0.5 75.0,2.5 76.5,0.5 78.0,2.5 79.5,0.5 81.0,2.5 82.5,0.5 84.0,2.5 85.5,0.5 87.0,2.5 88.5,0.5 90.0,2.5 91.5,0.5 93.0,2.5 94.5,0.5 96.0,2.5 97.5,0.5 99.0,2.5 100.5,0.5 102.0,2.5 103.5,0.5 105.0,2.5 106.5,0.5 108.0,2.5 109.5,0.5 111.0,2.5 112.5,0.5 114.0,2.5 115.5,0.5 117.0,2.5 118.5,0.5 120.0,2.5 121.5,0.5 123.0,2.5 124.5,0.5 126.0,2.5 127.5,0.5 129.0,2.5 130.5,0.5 132.0,2.5 133.5,0.5 135.0,2.5 136.5,0.5 138.0,2.5 139.5,0.5 141.0,2.5 142.5,0.5 144.0,2.5 145.5,0.5 147.0,2.5 148.5,0.5 150.0,2.5 151.5,0.5 153.0,2.5 154.5,0.5 156.0,2.5 157.5,0.5 159.0,2.5 160.5,0.5 162.0,2.5 163.5,0.5 165.0,2.5 166.5,0.5 168.0,2.5 169.5,0.5 171.0,2.5 172.5,0.5 174.0,2.5 175.5,0.5 177.0,2.5 178.5,0.5 180.0,2.5 181.5,0.5 183.0,2.5 184.5,0.5 186.0,2.5 187.5,0.5 189.0,2.5 190.5,0.5 192.0,2.5 193.5,0.5 195.0,2.5 196.5,0.5 198.0,2.5 199.5,0.5 201.0,2.5 202.5,0.5 204.0,2.5 205.5,0.5 207.0,2.5 208.5,0.5 210.0,2.5 211.5,0.5 213.0,2.5 214.5,0.5 216.0,2.5 217.5,0.5 219.0,2.5 220.5,0.5 222.0,2.5 223.5,0.5 225.0,2.5 226.5,0.5 228.0,2.5 229.5,0.5 231.0,2.5 232.5,0.5 234.0,2.5 235.5,0.5 237.0,2.5 238.5,0.5 240.0,2.5 241.5,0.5 243.0,2.5 244.5,0.5 246.0,2.5 247.5,0.5 249.0,2.5 250.5,0.5 252.0,2.5 253.5,0.5 255.0,2.5 256.5,0.5 258.0,2.5 259.5,0.5 261.0,2.5 262.5,0.5 264.0,2.5 265.5,0.5 267.0,2.5 268.5,0.5 270.0,2.5 271.5,0.5 273.0,2.5 274.5,0.5 276.0,2.5 277.5,0.5 279.0,2.5 280.5,0.5 282.0,2.5 283.5,0.5 285.0,2.5 286.5,0.5 288.0,2.5 289.5,0.5 291.0,2.5 292.5,0.5 294.0,2.5 295.5,0.5 297.0,2.5 298.5,0.5 300.0,2.5 301.5,0.5 303.0,2.5 304.5,0.5 306.0,2.5 307.5,0.5 309.0,2.5 310.5,0.5 312.0,2.5 313.5,0.5 315.0,2.5 316.5,0.5 318.0,2.5 319.5,0.5 321.0,2.5 322.5,0.5 324.0,2.5 325.5,0.5" fill="none" stroke="#e86262" stroke-width="1.2"/></svg>
</div>
</body></html>
